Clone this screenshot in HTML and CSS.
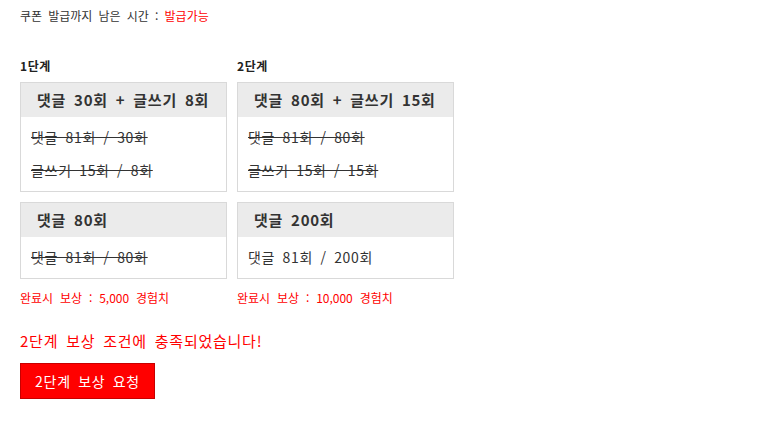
FILE: index.html
```html
<!DOCTYPE html>
<html lang="ko">
<head>
<meta charset="utf-8">
<link rel="stylesheet" href="styles.css">
</head>
<body>
<div class="page">
  <p class="timer">쿠폰 발급까지 남은 시간 : <span class="red">발급가능</span></p>
  <div class="stages">
    <div class="col col1">
      <div class="label">1단계</div>
      <div class="box">
        <div class="head">댓글 30회 + 글쓰기 8회</div>
        <div class="body">
          <div class="line done">댓글 81회 / 30회</div>
          <div class="line done">글쓰기 15회 / 8회</div>
        </div>
      </div>
      <div class="box">
        <div class="head">댓글 80회</div>
        <div class="body">
          <div class="line done">댓글 81회 / 80회</div>
        </div>
      </div>
      <div class="reward">완료시 보상 : 5,000 경험치</div>
    </div>
    <div class="col col2">
      <div class="label">2단계</div>
      <div class="box">
        <div class="head">댓글 80회 + 글쓰기 15회</div>
        <div class="body">
          <div class="line done">댓글 81회 / 80회</div>
          <div class="line done">글쓰기 15회 / 15회</div>
        </div>
      </div>
      <div class="box">
        <div class="head">댓글 200회</div>
        <div class="body">
          <div class="line">댓글 81회 / 200회</div>
        </div>
      </div>
      <div class="reward">완료시 보상 : 10,000 경험치</div>
    </div>
  </div>
  <p class="msg">2단계 보상 조건에 충족되었습니다!</p>
  <button class="btn" type="button">2단계 보상 요청</button>
</div>
</body>
</html>
```
FILE: styles.css
```css
html, body {
  margin: 0;
  padding: 0;
  background: #fff;
}
body {
  font-family: "Noto Sans CJK KR", "Noto Sans", sans-serif;
  color: #333;
}
.page {
  padding: 7px 20px 0 20px;
}
.timer {
  margin: 0;
  font-size: 12px;
  line-height: 18px;
  color: #333;
  word-spacing: 2.8px;
}
.red {
  color: #f00;
}
.stages {
  display: grid;
  grid-template-columns: 207px 217px;
  column-gap: 10px;
  margin-top: 32px;
}
.col {
  display: flex;
  flex-direction: column;
}
.label {
  font-size: 12px;
  font-weight: bold;
  line-height: 18px;
  color: #222;
  margin-bottom: 7px;
  letter-spacing: 0.05em;
}
.box {
  border: 1px solid #d9d9d9;
  margin-bottom: 10px;
}
.head {
  background: #ebebeb;
  height: 34px;
  line-height: 34px;
  padding-left: 16px;
  font-size: 15px;
  font-weight: bold;
  color: #333;
  white-space: nowrap;
  letter-spacing: 0.05em;
  word-spacing: 0.2em;
}
.body {
  display: flex;
  flex-direction: column;
  gap: 13px;
  padding: 10px 10px 11px 10px;
}
.line {
  font-size: 14px;
  line-height: 20px;
  color: #333;
  white-space: nowrap;
  letter-spacing: 0.05em;
  word-spacing: 0.2em;
}
.done {
  text-decoration: line-through;
}
.reward {
  font-size: 12px;
  line-height: 18px;
  color: #f00;
  word-spacing: 3.5px;
}
.msg {
  margin: 23px 0 0 0;
  font-size: 15px;
  line-height: 22px;
  color: #f00;
  letter-spacing: 0.05em;
  word-spacing: 0.2em;
}
.btn {
  display: block;
  margin-top: 11px;
  width: 135px;
  height: 36px;
  background: #f00;
  border: 1px solid #c80000;
  color: #fff;
  font-family: "Noto Sans CJK KR", "Noto Sans", sans-serif;
  font-size: 14px;
  padding: 0;
  letter-spacing: 0.05em;
  word-spacing: 0.2em;
}
```
